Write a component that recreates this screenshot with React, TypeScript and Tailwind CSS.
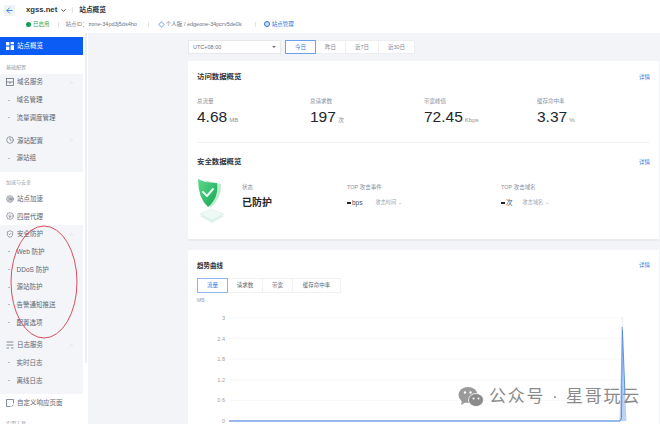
import { ArrowLeft, ChevronDown, ChevronUp, Clock, Target, CircleArrowDown, ShieldCheck } from 'lucide-react';

const font = { fontFamily: '"Liberation Sans", "Noto Sans CJK SC", sans-serif' };

function OverviewIcon() {
  return (
    <svg width="8" height="8" viewBox="0 0 8 8" className="mr-[3px]" fill="white">
      <rect x="0" y="0" width="3.4" height="3.4" />
      <rect x="4.6" y="0" width="3.4" height="2.2" />
      <rect x="0" y="4.6" width="3.4" height="3.4" />
      <rect x="4.6" y="3.2" width="3.4" height="4.8" />
    </svg>
  );
}

function DomainIcon() {
  return (
    <svg width="8" height="8" viewBox="0 0 8 8" fill="none" stroke="currentColor" strokeWidth="0.8">
      <rect x="0.5" y="0.5" width="7" height="7" />
      <path d="M0.5 4 H7.5 M4 4 V5.8" />
    </svg>
  );
}

function LogIcon() {
  return (
    <svg width="8" height="8" viewBox="0 0 8 8" fill="none" stroke="currentColor" strokeWidth="0.8">
      <path d="M0.5 1 H7.5 M0.5 4 H7.5 M0.5 7 H3 M5 7 H7.5" />
    </svg>
  );
}

function PageIcon() {
  return (
    <svg width="8" height="8" viewBox="0 0 8 8" fill="none" stroke="currentColor" strokeWidth="0.8">
      <path d="M4.5 7.5 H0.5 V0.5 H7.5 V4.5 M5.5 7.5 L7.5 5.8" />
    </svg>
  );
}

function SubItem({ label }: { label: string }) {
  return (
    <div className="h-[17.7px] flex items-center pl-[8px] text-[6.5px] text-[#5f6570]">
      <span className="w-[2px] h-[1px] bg-[#b5bac3] mr-[6.5px]"></span>
      {label}
    </div>
  );
}

function GroupHead({ label, icon }: { label: string; icon: React.ReactNode }) {
  return (
    <div className="h-[17.7px] flex items-center pl-[6px] pr-[9px] text-[6.5px] text-[#5f6570]">
      <span className="w-[8px] mr-[3px] flex items-center text-[#6b7280]">{icon}</span>
      <span className="flex-1">{label}</span>
      <ChevronUp size={5} className="text-[#c4c8cf]" />
    </div>
  );
}

function NavItem({ label, icon }: { label: string; icon: React.ReactNode }) {
  return (
    <div className="h-[17.7px] flex items-center pl-[6px] text-[6.5px] text-[#5f6570]">
      <span className="w-[8px] mr-[3px] flex items-center text-[#6b7280]">{icon}</span>
      {label}
    </div>
  );
}

function Stat({ label, value, unit }: { label: string; value: string; unit: string }) {
  return (
    <div>
      <div className="text-[5.5px] leading-[7px] text-[#8b9099]">{label}</div>
      <div className="mt-[3px] flex items-baseline text-[#22262e]">
        <span className="text-[15.5px] leading-[18px]">{value}</span>
        <span className="ml-[2px] text-[6px] text-[#8b9099]">{unit}</span>
      </div>
    </div>
  );
}

function ShieldArt() {
  return (
    <svg width="30" height="46" viewBox="0 0 30 46">
      <defs>
        <linearGradient id="sg" x1="0" y1="0" x2="1" y2="1">
          <stop offset="0" stopColor="#5fd98a" />
          <stop offset="1" stopColor="#16a558" />
        </linearGradient>
      </defs>
      <path d="M3 38 L14 33 L27 38 L15 45 Z" fill="#dff3ea" />
      <path d="M3 36 L14 31 L27 36 L15 42 Z" fill="#eef8f4" stroke="#d5ece2" strokeWidth="0.5" />
      <path d="M9 2 Q18 5 24 6 Q25 20 13 30 Z" fill="#bfeccd" />
      <path d="M1 1 Q8 5 20 5 Q22 20 11 29 Q1 20 1 1 Z" fill="url(#sg)" />
      <path d="M6 14 L10 18 L16 11" fill="none" stroke="#e8fbef" strokeWidth="2" strokeLinecap="round" strokeLinejoin="round" />
    </svg>
  );
}

function TrendChart() {
  const ticks = [
    { label: '3', y: 8 },
    { label: '2.4', y: 28.6 },
    { label: '1.8', y: 49.2 },
    { label: '1.2', y: 69.8 },
    { label: '0.6', y: 90.4 },
    { label: '0', y: 111 },
  ];
  return (
    <svg width="450" height="116" viewBox="0 0 450 116" className="block" style={font}>
      {ticks.map(t => (
        <g key={t.label}>
          <text x="37" y={t.y + 2} textAnchor="end" fontSize="5.5" fill="#9aa0a9">{t.label}</text>
          <line x1="41" x2="436" y1={t.y} y2={t.y} stroke="#f4f5f7" strokeWidth="0.7" />
        </g>
      ))}
      <path d="M434 17 L438.5 111 L431.5 111 Z" fill="#bcd2f5" />
      <path d="M432 111 Q433 111 433.5 107 L434.3 17 L437 85" fill="none" stroke="#4f87e0" strokeWidth="0.9" />
      <line x1="41" x2="432" y1="111" y2="111" stroke="#76a3e6" strokeWidth="1.4" />
      <line x1="434.3" x2="434.3" y1="7" y2="20" stroke="#d9dce1" strokeWidth="0.6" />
    </svg>
  );
}

export default function App() {
  return (
    <div className="relative w-[660px] h-[424px] overflow-hidden bg-white flex flex-col" style={font}>
      {/* Header */}
      <div className="h-[33px] shrink-0 bg-white pt-[4px]">
        <div className="h-[12px] flex items-center pl-[4px]">
          <span className="w-[11px] h-[11px] bg-[#f0f3f8] flex items-center justify-center">
            <ArrowLeft size={9} className="text-[#3b82e6]" strokeWidth={2.5} />
          </span>
          <span className="ml-[11px] text-[7.7px] font-bold text-[#30343b]">xgss.net</span>
          <ChevronDown size={7} strokeWidth={3} className="ml-[3px] text-[#30343b]" />
          <span className="ml-[5px] w-px h-[6px] bg-[#e3e5ea]"></span>
          <span className="ml-[6px] text-[6.7px] font-bold text-[#30343b]">站点概览</span>
        </div>
        <div className="mt-[2px] h-[12px] flex items-center pl-[26px] text-[5.5px] text-[#7f8590]">
          <span className="w-[5px] h-[5px] rounded-full bg-[#12a150] mr-[2px]"></span>
          <span className="text-[#2aa65c]">已启用</span>
          <span className="ml-[8px] w-px h-[5px] bg-[#dfe2e7]"></span>
          <span className="ml-[7px]">站点ID：</span>
          <span className="ml-[1px] text-[#6b7280]">zone-34pd3j5ds4ho</span>
          <span className="ml-[11px] w-px h-[5px] bg-[#dfe2e7]"></span>
          <span className="ml-[10px] w-[5px] h-[5px] rotate-45 border border-[#9fc0ee]"></span>
          <span className="ml-[2px] text-[#6b7280]">个人版 / edgeone-34pcrv5de0k</span>
          <span className="ml-[13px] w-px h-[5px] bg-[#dfe2e7]"></span>
          <span className="ml-[8px] w-[6px] h-[6px] rounded-full border border-[#2f6fdb] bg-[#cfe0fa]"></span>
          <span className="ml-[2px] text-[#2f6fdb]">站点管理</span>
        </div>
      </div>

      <div className="flex-1 flex min-h-0">
        {/* Sidebar */}
        <aside className="w-[88px] shrink-0 flex bg-white overflow-hidden">
          <div className="w-[83px] pt-[4px]">
            <div className="h-[17.5px] flex items-center pl-[6px] bg-[#0a5cf5] text-white text-[6.5px]">
              <OverviewIcon />
              站点概览
            </div>
            <div className="h-[19px] pt-[9px] pl-[6px] text-[5px] leading-[7px] text-[#9aa0a9]">基础配置</div>
            <div className="bg-[#f4f5f8] pb-[5px]">
              <GroupHead label="域名服务" icon={<DomainIcon />} />
              <SubItem label="域名管理" />
              <SubItem label="流量调度管理" />
              <div className="h-[5px]"></div>
              <GroupHead label="源站配置" icon={<Clock size={8} />} />
              <SubItem label="源站组" />
            </div>
            <div className="h-[11px] pt-[7px] pl-[6px] text-[5px] leading-[7px] text-[#9aa0a9] box-content">加速与安全</div>
            <NavItem label="站点加速" icon={<Target size={8} />} />
            <NavItem label="四层代理" icon={<CircleArrowDown size={8} />} />
            <div className="bg-[#f4f5f8] pb-[4px]">
              <GroupHead label="安全防护" icon={<ShieldCheck size={8} />} />
              <SubItem label="Web 防护" />
              <SubItem label="DDoS 防护" />
              <SubItem label="源站防护" />
              <SubItem label="告警通知推送" />
              <SubItem label="配置选项" />
              <div className="h-[5px]"></div>
              <GroupHead label="日志服务" icon={<LogIcon />} />
              <SubItem label="实时日志" />
              <SubItem label="离线日志" />
            </div>
            <div className="mt-px">
              <NavItem label="自定义响应页面" icon={<PageIcon />} />
            </div>
            <div className="pt-[8px] pl-[6px] text-[5px] leading-[7px] text-[#9aa0a9]">实用工具</div>
          </div>
          <div className="w-[5px] bg-white flex justify-center">
            <div className="w-[2px] h-[330px] bg-[#eceef1]"></div>
          </div>
        </aside>

        {/* Main */}
        <main className="flex-1 min-w-0 bg-[#f2f4f8] pl-[100px] pr-px pt-[7px]">
          <div className="flex items-center h-[14px]">
            <div className="w-[93px] h-[14px] bg-white border border-[#e6e8ec] flex items-center justify-between px-[4px] text-[5.5px] text-[#6b7280]">
              <span>UTC+08:00</span>
              <span className="w-0 h-0 border-x-[2px] border-x-transparent border-t-[2px] border-t-[#6b7280]"></span>
            </div>
            <div className="ml-[4px] flex text-[5.5px] text-[#7f8590] bg-white h-[14px]">
              <div className="w-[31px] flex items-center justify-center border border-[#6f9fe8] text-[#3a7be0]">今日</div>
              <div className="w-[30px] flex items-center justify-center border-y border-r border-[#eceef1]">昨日</div>
              <div className="w-[33px] flex items-center justify-center border-y border-r border-[#eceef1]">近7日</div>
              <div className="w-[36px] flex items-center justify-center border-y border-r border-[#eceef1]">近30日</div>
            </div>
          </div>

          {/* Overview card */}
          <section className="mt-[7px] h-[180px] bg-white border-b-2 border-[#e9ebef] px-[9px] pt-[11px]">
            <div className="flex items-center justify-between h-[10px]">
              <h3 className="text-[7.4px] font-bold text-[#30343b]">访问数据概览</h3>
              <span className="text-[5.5px] text-[#2f7de0]">详情</span>
            </div>
            <div className="mt-[16px] grid grid-cols-[113px_114px_113px_1fr] h-[45px] border-b border-[#f2f3f5]">
              <Stat label="总流量" value="4.68" unit="MB" />
              <Stat label="总请求数" value="197" unit="次" />
              <Stat label="带宽峰值" value="72.45" unit="Kbps" />
              <Stat label="缓存命中率" value="3.37" unit="%" />
            </div>
            <div className="mt-[14px] flex items-center justify-between h-[10px]">
              <h3 className="text-[7.4px] font-bold text-[#30343b]">安全数据概览</h3>
              <span className="text-[5.5px] text-[#2f7de0]">详情</span>
            </div>
            <div className="mt-[11px] flex">
              <ShieldArt />
              <div className="ml-[15px] w-[105px] pt-[6px]">
                <div className="text-[5.5px] leading-[7px] text-[#8b9099]">状态</div>
                <div className="mt-[6px] text-[10px] leading-[12px] font-bold text-[#22262e]">已防护</div>
              </div>
              <div className="w-[154px] pt-[6px]">
                <div className="text-[5.5px] leading-[7px] text-[#8b9099]">TOP 攻击事件</div>
                <div className="mt-[7px] flex items-center text-[6.5px] text-[#4b5059]">
                  <span className="w-[4px] h-[1.5px] mr-px bg-[#22262e]"></span>
                  <span>bps</span>
                  <span className="ml-[13px] text-[5.2px] text-[#9aa0a9]">攻击时间 ⌄</span>
                </div>
              </div>
              <div className="pt-[6px]">
                <div className="text-[5.5px] leading-[7px] text-[#8b9099]">TOP 攻击域名</div>
                <div className="mt-[7px] flex items-center text-[6.5px] text-[#4b5059]">
                  <span className="w-[4px] h-[1.5px] mr-px bg-[#22262e]"></span>
                  <span>次</span>
                  <span className="ml-[10px] text-[5.2px] text-[#9aa0a9]">攻击域名 ⌄</span>
                </div>
              </div>
            </div>
          </section>

          {/* Trend card */}
          <section className="mt-[9px] h-[180px] bg-white px-[9px] pt-[11px]">
            <div className="flex items-center justify-between h-[9px]">
              <h3 className="text-[6.5px] font-bold text-[#30343b]">趋势曲线</h3>
              <span className="text-[5.5px] text-[#2f7de0]">详情</span>
            </div>
            <div className="mt-[8px] flex h-[15px] text-[5.5px] text-[#5f6570]">
              <div className="w-[31px] flex items-center justify-center border border-[#8fb5ee] text-[#3a7be0]">流量</div>
              <div className="w-[35px] flex items-center justify-center border-y border-r border-[#f0f1f4]">请求数</div>
              <div className="w-[30px] flex items-center justify-center border-y border-r border-[#f0f1f4]">带宽</div>
              <div className="w-[48px] flex items-center justify-center border-y border-r border-[#f0f1f4]">缓存命中率</div>
            </div>
            <div className="mt-[4px] text-[5px] leading-[7px] text-[#9aa0a9]">MB</div>
            <div className="-ml-[9px] mt-[6px]">
              <TrendChart />
            </div>
          </section>
        </main>
      </div>

      {/* Hand-drawn annotation on top of the sidebar */}
      <svg className="absolute left-[8px] top-[224px] pointer-events-none" width="74" height="116" viewBox="0 0 74 116">
        <ellipse cx="36" cy="58" rx="33" ry="56" fill="none" stroke="#d23a4c" strokeWidth="0.9" />
      </svg>

      {/* Watermark */}
      <div className="absolute left-[458px] top-[386px] flex items-center text-[#8a8a8a] pointer-events-none">
        <svg width="26" height="22" viewBox="0 0 26 22">
          <ellipse cx="10" cy="9" rx="9.5" ry="8" fill="#9a9a9a" />
          <path d="M4 14 L3 19 L8 16 Z" fill="#9a9a9a" />
          <ellipse cx="18" cy="14" rx="7.5" ry="6.5" fill="#8a8a8a" stroke="white" strokeWidth="0.8" />
          <circle cx="7" cy="6.5" r="1.2" fill="white" />
          <circle cx="12.5" cy="6.5" r="1.2" fill="white" />
          <circle cx="15.5" cy="12.5" r="1" fill="white" />
          <circle cx="20.5" cy="12.5" r="1" fill="white" />
        </svg>
        <span className="ml-[5px] text-[17px] leading-[22px] whitespace-nowrap tracking-[1.8px]">公众号 · 星哥玩云</span>
      </div>
    </div>
  );
}
